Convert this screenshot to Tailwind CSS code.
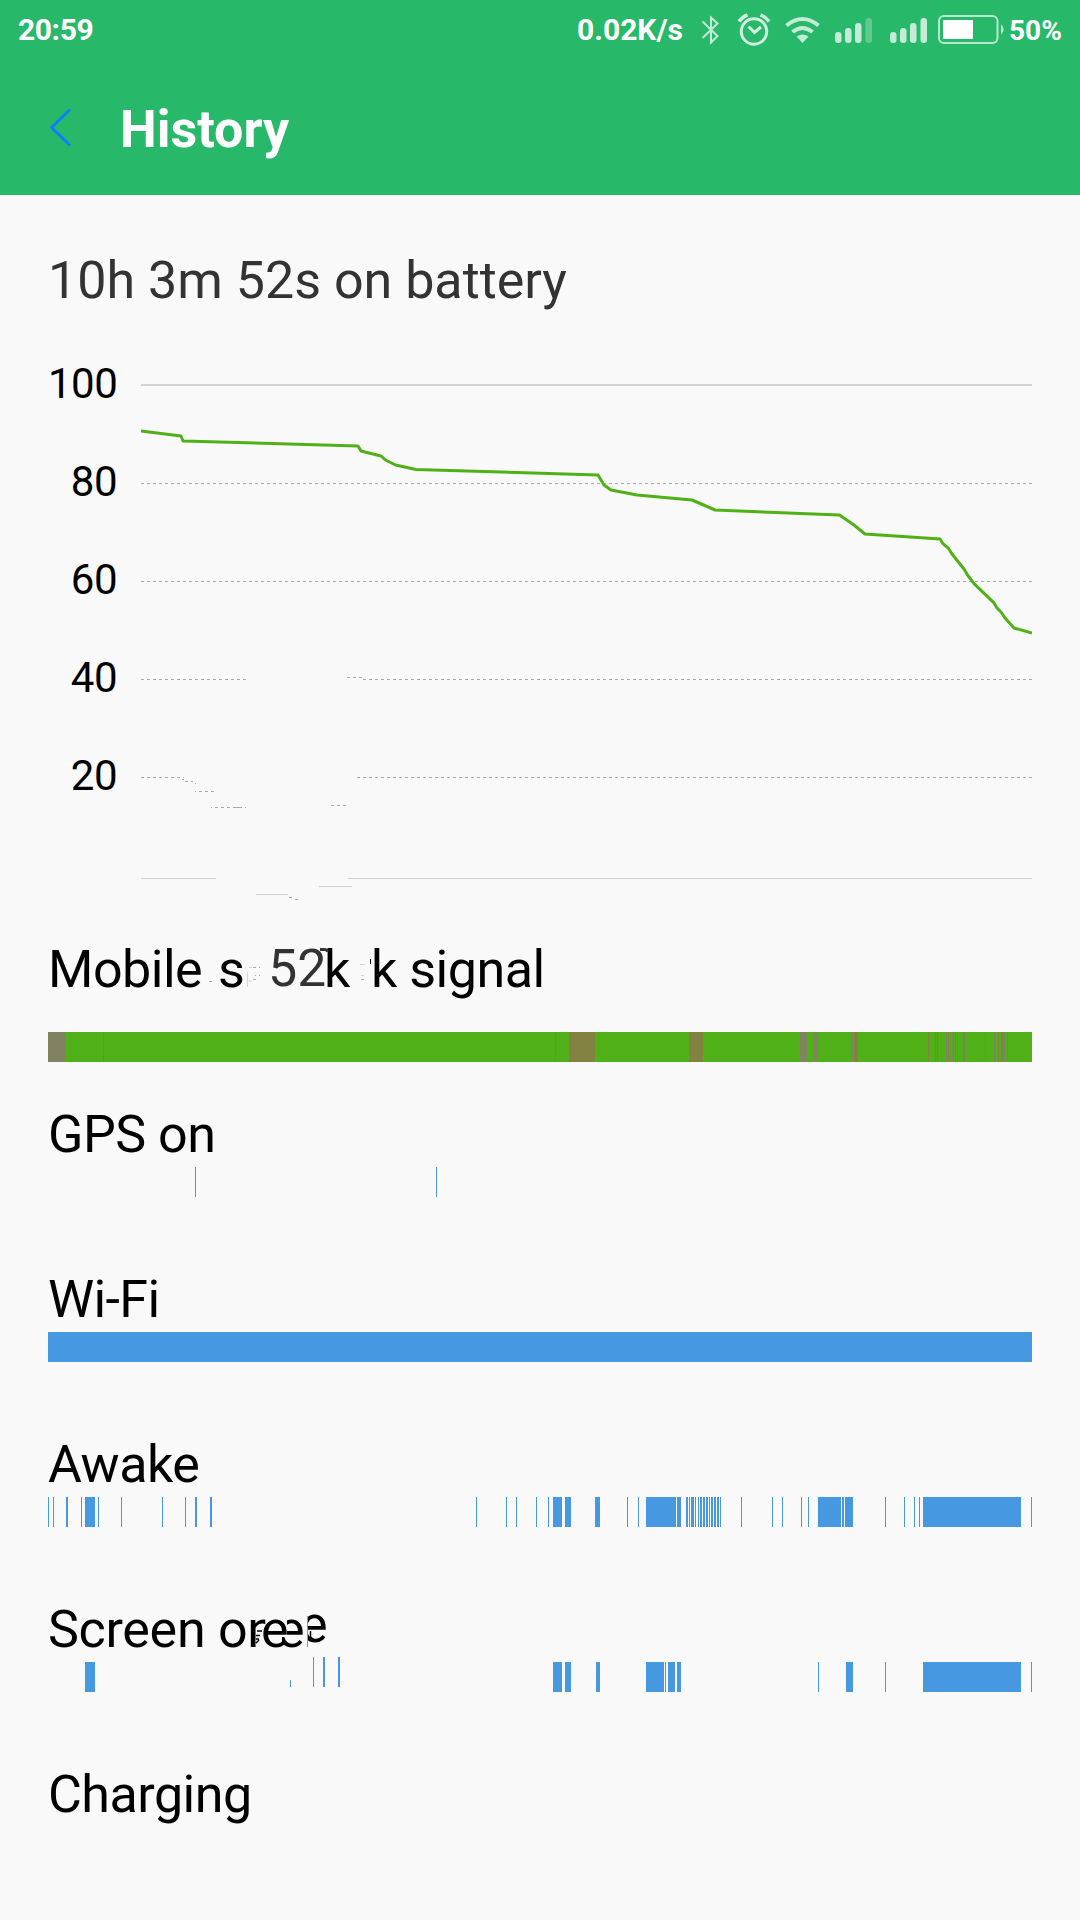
<!DOCTYPE html>
<html lang="en">
<head>
    <meta charset="UTF-8">
    <meta name="viewport" content="width=device-width, initial-scale=1.0">
    <title>History</title>
    <script src="https://cdn.jsdelivr.net/npm/@tailwindcss/browser@4"></script>
</head>
<body class="bg-[#f9f9f9] w-[1080px] h-[1920px] overflow-hidden font-['Roboto',sans-serif] text-black">
    <header class="bg-[#28b869] h-[195px] text-white">
        <div class="flex h-[60px] font-bold text-[30px] leading-[60px] whitespace-nowrap">
            <span class="pl-[18px] flex-1 tracking-[-0.4px]">20:59</span>
            <span class="w-[115px]">0.02K/s</span>
            <!-- bluetooth -->
            <svg class="w-9 h-[60px]" viewBox="692 0 36 60" fill="none" stroke="#c4ebd5" stroke-width="2"><path d="M702.500 21.500L717.500 36L711 42.500V17.500L717.500 23.500L702.500 38"/></svg>
            <!-- alarm -->
            <svg class="w-[54px] h-[60px]" viewBox="728 0 54 60" fill="none" stroke="#d0efdd"><circle cx="754" cy="31.500" r="12.700" stroke-width="3"/><path stroke-width="3" d="M748.500 26.500L754.500 32.500L761 27"/><path stroke-width="3.500" d="M739 21.500Q742 17 747.500 14.800M760.500 14.800Q766 17 769 21.500"/></svg>
            <!-- wifi -->
            <svg class="w-12 h-[60px]" viewBox="782 0 48 60" fill="none" stroke="#c4ebd5" stroke-width="4"><path d="M786.500 25.500Q802.500 12.500 818.500 25.500"/><path d="M792.500 32Q802.500 24 812.500 32"/><path fill="#c4ebd5" stroke="none" d="M796.500 36.500Q802.500 32.500 808.500 36.500L802.500 43Z"/></svg>
            <!-- sim 1 / sim 2 -->
            <svg class="w-[55px] h-[60px]" viewBox="830 0 55 60" fill="#c4ebd5"><rect x="835" y="32" width="6.500" height="11" rx="3"/><rect x="845" y="28" width="6.500" height="15" rx="3"/><rect x="855" y="23" width="6.500" height="20" rx="3"/><rect x="865.500" y="18" width="6.500" height="25" rx="3" fill="#5fcb90"/></svg>
            <svg class="w-12 h-[60px]" viewBox="885 0 48 60" fill="#c4ebd5"><rect x="890" y="32" width="6.500" height="11" rx="3"/><rect x="900" y="28" width="6.500" height="15" rx="3"/><rect x="910" y="23" width="6.500" height="20" rx="3"/><rect x="920.500" y="18" width="6.500" height="25" rx="3"/></svg>
            <!-- battery -->
            <svg class="w-[76px] h-[60px]" viewBox="933 0 76 60"><rect x="939" y="16" width="58.500" height="27" rx="5" fill="none" stroke="#b9e7cd" stroke-width="2"/><rect x="943" y="20" width="30" height="19" rx="1" fill="#fff"/><path d="M1001 24Q1006 29.500 1001 35Z" fill="#b9e7cd"/></svg>
            <span class="w-[71px] text-[28px] leading-[61px]">50%</span>
        </div>
        <div class="flex h-[135px] pl-[48px]">
            <svg class="w-[72px] h-[135px]" viewBox="48 60 72 135" fill="none" stroke="#0a7fff" stroke-width="3" stroke-linecap="round" stroke-linejoin="round"><path d="M69 110.500L51.500 127.500L69 144.500"/></svg>
            <h1 class="pt-[39px] font-bold text-[52px] leading-[61px]">History</h1>
        </div>
    </header>
    <main class="px-[48px] pt-[55px] text-[52px] leading-[61px]">
        <h2 class="text-[#333]">10h 3m 52s on battery</h2>
        <div class="flex mt-[23px] h-[605px]">
            <div class="w-[93px] pt-px pr-[24px] text-right text-[42px] leading-[98px] tracking-[-0.5px]">
                <div>100</div>
                <div>80</div>
                <div>60</div>
                <div>40</div>
                <div>20</div>
            </div>
            <svg class="w-[891px] h-[605px]" viewBox="141 334 891 605" fill="none">
                <path stroke="#d3d3d3" stroke-width="2" d="M141 385H1032"/>
                <path stroke="#d0d0d0" d="M141 878.500H216M348 878.500H1032M256 894.500H288M319 886.500H352"/>
                <g stroke="#aaa" stroke-dasharray="3 3">
                    <path d="M141 483.500H1032"/>
                    <path d="M141 581.500H1032"/>
                    <path d="M141 679.500H247"/>
                    <path d="M347 677.500H362"/>
                    <path d="M363 679.500H1032"/>
                    <path d="M141 777.500H184"/>
                    <path d="M357 777.500H1032"/>
                    <path d="M199 791.500H214"/>
                    <path d="M215 807.500H246"/>
                    <path d="M331 805.500H346"/>
                </g>
                <path stroke="#aaa" d="M182 779.500h2M185 781.500h3M191 781.500h2M195 783.500h1M195 791.500h1M211 807.500h1M236 807.500h3M289 897.500h3M295 899.500h3"/>
                <polyline stroke="#50b018" stroke-width="3" stroke-linejoin="round" points="141,431 181,436 183,441 358,446 361,451 381,456 385.500,460 395.500,465 416,469.500 598,475 604,485 611,490 637,495 692,500 715,510 839.500,515 854,525 865,534 940,539 943,543.700 948.700,548.700 952,554 964,569 967.500,575 974,583.700 993.500,602.300 997,608 1001.600,612.700 1005,618 1014,628 1032,633"/>
            </svg>
        </div>

        <section class="h-[165px] tracking-[-0.5px]">
            <h3 class="relative h-[61px] whitespace-pre">Mobile<span class="absolute left-[170px]">s</span><span class="absolute left-[220px] -top-px text-[#333] tracking-normal [clip-path:inset(0_2px_0_0)]">52</span><span class="absolute left-[276px]">k</span><span class="absolute left-[323px]">k signal</span>
                <svg class="absolute left-0 top-0 w-[500px] h-[61px]" viewBox="48 939 500 61" fill="none">
                    <path stroke="#aaa" d="M209 981.500h3M253 967.500h3M253 979.500h3M259 967.500h1M259 975.500h1M255 975.500h1M361 979.500h3"/>
                    <path stroke="#d5d5d5" d="M249 967.500h3M248 981h4M360 964.500h5M361 975.500h3M247.500 972v15"/>
                    <path stroke="#333" stroke-width="3" d="M320 949.500h4q3 0 4 2"/>
                    <path stroke="#000" d="M370.500 959v5"/>
                </svg>
            </h3>
            <svg class="mt-8 w-[984px] h-[30px]" viewBox="48 0 984 30" data-bar="signal"><rect x="48" width="984" height="30" fill="#50b018"/></svg>
        </section>
        <section class="h-[165px] tracking-[-0.5px]">
            <h3>GPS on</h3>
            <svg class="mt-[2px] w-[984px] h-[30px]" viewBox="48 0 984 30" data-bar="gps"></svg>
        </section>
        <section class="h-[165px] tracking-[-0.6px]">
            <h3>Wi-Fi</h3>
            <svg class="mt-[2px] w-[984px] h-[30px]" viewBox="48 0 984 30" data-bar="wifi"></svg>
        </section>
        <section class="h-[165px] tracking-[-0.5px]">
            <h3>Awake</h3>
            <svg class="mt-[2px] w-[984px] h-[30px]" viewBox="48 0 984 30" data-bar="awake"></svg>
        </section>
        <section class="h-[165px]">
            <h3 class="relative h-[61px] whitespace-pre tracking-[-0.3px]">Screen o<span class="inline-block [clip-path:polygon(0_0,18px_0,18px_30px,9px_30px,9px_100%,0_100%)]">n</span><span class="absolute left-[213px]">e</span><span class="absolute left-[229px] [clip-path:polygon(10px_0,100%_0,100%_100%,5px_100%,5px_38px,10px_38px)]">e</span><span class="absolute left-[252px] -top-[5px] [clip-path:inset(0_0_0_8px)]">e</span>
                <svg class="absolute left-0 top-0 w-[300px] h-[61px]" viewBox="48 1599 300 61" fill="none">
                    <path stroke="#000" stroke-width="1.500" d="M257 1631h5M256 1635.500h4M256 1639h3M256 1643l3-3M310.500 1631v6l4 3"/>
                    <path stroke="#999" d="M307.500 1616v31"/>
                </svg>
            </h3>
            <svg class="mt-[2px] w-[984px] h-[30px] overflow-visible" viewBox="48 0 984 30" data-bar="screen"><path fill="#4698e0" d="M290 18h1v7h-1zM313-5h1v30h-1zM323-5h2v30h-2zM338-5h2v30h-2z"/></svg>
        </section>
        <section class="tracking-[-0.5px]">
            <h3>Charging</h3>
        </section>
    </main>
    <script>
        // [start, end, colour]
        const blue = '#4698e0';
        const bars = {
            signal: [
                [48, 66, '#828261'], [103, 104, '#8a7a55'], [555, 556, '#6f8f3c'], [569, 595, '#848242'], [689, 703, '#848242'],
                [800, 807, '#808461'], [813, 818, '#808461'], [851, 853, '#808461'], [853, 854, '#699c35'], [854, 858, '#848242'],
                [928, 929, '#848242'], [935, 936, '#848242'], [937, 938, '#718f30'], [946, 947, '#808461'], [948, 949, '#848242'],
                [952, 954, '#808461'], [955, 956, '#848242'], [957, 958, '#6f8f4c'], [963, 964, '#848242'], [964, 966, '#808461'],
                [985, 986, '#6f8f4c'], [994, 996, '#808461'], [998, 999, '#848242'], [1001, 1003, '#848252'], [1003, 1005, '#808461'],
                [1007, 1008, '#6f8f4c']
            ],
            gps: [[195, 196], [436, 437]],
            wifi: [[48, 1032]],
            awake: [
                [48, 49], [53, 54], [66, 68], [81, 82], [85, 95], [98, 99], [121, 122], [162, 163], [185, 186], [195, 197], [210, 212],
                [476, 477], [506, 507], [516, 517], [536, 537], [548, 549], [553, 562], [565, 571], [595, 600], [627, 628], [638, 639],
                [646, 676], [677, 681], [686, 688], [689, 690], [691, 694], [695, 696], [698, 699], [700, 702], [703, 705], [706, 708],
                [709, 710], [711, 713], [714, 716], [717, 719], [720, 721], [741, 742], [772, 773], [782, 783], [801, 802], [808, 809],
                [818, 841], [842, 844], [845, 853], [885, 886], [904, 905], [914, 915], [919, 920], [923, 1021], [1031, 1032]
            ],
            screen: [
                [85, 95], [553, 562], [565, 571], [596, 600], [646, 664], [665, 666], [668, 675], [677, 681], [818, 819],
                [846, 853], [885, 886], [923, 1021], [1031, 1032]
            ]
        };
        document.querySelectorAll('[data-bar]').forEach(svg => {
            bars[svg.dataset.bar].forEach(([start, end, color]) => {
                const rect = document.createElementNS('http://www.w3.org/2000/svg', 'rect');
                rect.setAttribute('x', start);
                rect.setAttribute('width', end - start);
                rect.setAttribute('height', 30);
                rect.setAttribute('fill', color || blue);
                svg.appendChild(rect);
            });
        });
    </script>
</body>
</html>
